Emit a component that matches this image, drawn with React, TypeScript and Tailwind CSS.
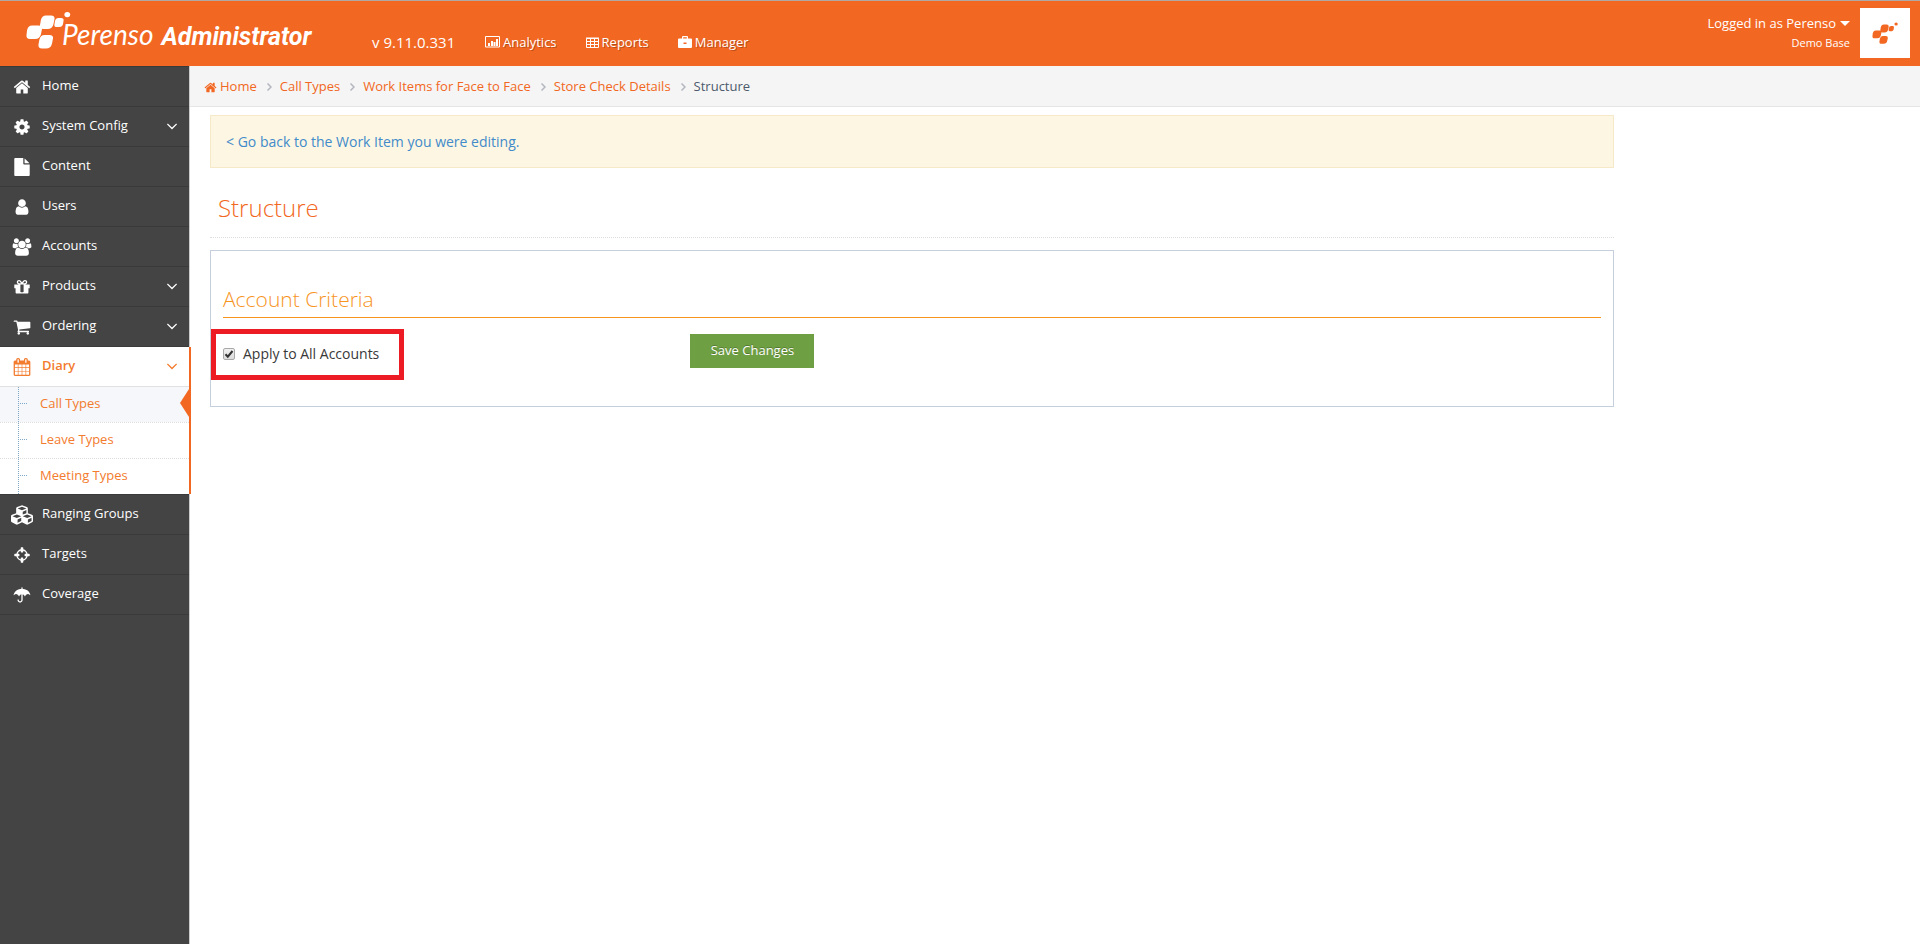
import { FaCubes } from "react-icons/fa";

const icons = {
    home: "M1472 992v480q0 26-19 45t-45 19h-384v-384h-256v384h-384q-26 0-45-19t-19-45v-480q0-1 .5-3t.5-3l575-474 575 474q1 2 1 6zm223-69l-62 74q-8 9-21 11h-3q-13 0-21-7l-692-577-692 577q-12 8-24 7-13-2-21-11l-62-74q-8-10-7-23.5t11-21.5l719-599q32-26 76-26t76 26l244 204v-195q0-14 9-23t23-9h192q14 0 23 9t9 23v408l219 182q10 8 11 21.5t-7 23.5z",
    cog: "M1152 896q0-106-75-181t-181-75-181 75-75 181 75 181 181 75 181-75 75-181zm512-109v222q0 12-8 23t-20 13l-185 28q-19 54-39 91 35 50 107 138 10 12 10 25t-9 23q-27 37-99 108t-94 71q-12 0-26-9l-138-108q-44 23-91 38-16 136-29 186-7 28-36 28h-222q-14 0-24.5-8.5t-11.5-21.5l-28-184q-49-16-90-37l-141 107q-10 9-25 9-14 0-25-11-126-114-165-168-7-10-7-23 0-12 8-23 15-21 51-66.5t54-70.5q-27-50-41-99l-183-27q-13-2-21-12.5t-8-23.5v-222q0-12 8-23t19-13l186-28q14-46 39-92-40-57-107-138-10-12-10-24 0-10 9-23 26-36 98.5-107.5t94.5-71.5q13 0 26 10l138 107q44-23 91-38 16-136 29-186 7-28 36-28h222q14 0 24.5 8.5t11.5 21.5l28 184q49 16 90 37l142-107q9-9 24-9 13 0 25 10 129 119 165 170 7 8 7 22 0 12-8 23-15 21-51 66.5t-54 70.5q26 50 41 98l183 28q13 2 21 12.5t8 23.5z",
    file: "M1152 512v-472q22 14 36 28l408 408q14 14 28 36h-472zm-128 32q0 40 28 68t68 28h544v1056q0 40-28 68t-68 28h-1344q-40 0-68-28t-28-68v-1600q0-40 28-68t68-28h800v544z",
    user: "M1536 1399q0 109-62.5 187t-150.5 78h-854q-88 0-150.5-78t-62.5-187q0-85 8.5-160.5t31.5-152 58.5-131 94-89 134.5-34.5q131 128 313 128t313-128q76 0 134.5 34.5t94 89 58.5 131 31.5 152 8.5 160.5zm-256-887q0 159-112.5 271.5t-271.5 112.5-271.5-112.5-112.5-271.5 112.5-271.5 271.5-112.5 271.5 112.5 112.5 271.5z",
    users: "M657 896q-162 5-265 128h-134q-82 0-138-40.5t-56-118.5q0-353 124-353 6 0 43.5 21t97.5 42.5 119 21.5q67 0 133-23-5 37-5 66 0 159 81 256zm1071 637q0 120-73 189.5t-194 69.5h-874q-121 0-194-69.5t-73-189.5q0-53 3.5-103.5t14-109 26.5-108.5 43-97.5 62-81 85.5-53.5 111.5-20q10 0 43 21.5t73 48 107 48 135 21.5 135-21.5 107-48 73-48 43-21.5q61 0 111.5 20t85.5 53.5 62 81 43 97.5 26.5 108.5 14 109 3.5 103.5zm-1024-1277q0 106-75 181t-181 75-181-75-75-181 75-181 181-75 181 75 75 181zm704 384q0 159-112.5 271.5t-271.5 112.5-271.5-112.5-112.5-271.5 112.5-271.5 271.5-112.5 271.5 112.5 112.5 271.5zm576 225q0 78-56 118.5t-138 40.5h-134q-103-123-265-128 81-97 81-256 0-29-5-66 66 23 133 23 59 0 119-21.5t97.5-42.5 43.5-21q124 0 124 353zm-128-609q0 106-75 181t-181 75-181-75-75-181 75-181 181-75 181 75 75 181z",
    gift: "M1056 1356v-716h-320v716q0 25 18 38.5t46 13.5h192q28 0 46-13.5t18-38.5zm-456-844h195l-126-161q-26-31-69-31-40 0-68 28t-28 68 28 68 68 28zm688-96q0-40-28-68t-68-28q-43 0-69 31l-125 161h194q40 0 68-28t28-68zm376 256v320q0 14-9 23t-23 9h-96v416q0 40-28 68t-68 28h-1088q-40 0-68-28t-28-68v-416h-96q-14 0-23-9t-9-23v-320q0-14 9-23t23-9h440q-93 0-158.5-65.5t-65.5-158.5 65.5-158.5 158.5-65.5q107 0 168 77l128 165 128-165q61-77 168-77 93 0 158.5 65.5t65.5 158.5-65.5 158.5-158.5 65.5h440q14 0 23 9t9 23z",
    cart: "M704 1536q0 52-38 90t-90 38-90-38-38-90 38-90 90-38 90 38 38 90zm896 0q0 52-38 90t-90 38-90-38-38-90 38-90 90-38 90 38 38 90zm128-1088v512q0 24-16.5 42.5t-40.5 21.5l-1044 122q13 60 13 70 0 16-24 64h920q26 0 45 19t19 45-19 45-45 19h-1024q-26 0-45-19t-19-45q0-11 8-31.5t16-36 21.5-40 15.5-29.5l-177-823h-204q-26 0-45-19t-19-45 19-45 45-19h256q16 0 28.5 6.5t19.5 15.5 13 24.5 8 26 5.5 29.5 4.5 26h1201q26 0 45 19t19 45z",
    calendar: "M192 1664h288v-288h-288v288zm352 0h320v-288h-320v288zm-352-352h288v-320h-288v320zm352 0h320v-320h-320v320zm-352-384h288v-288h-288v288zm736 736h320v-288h-320v288zm-384-736h320v-288h-320v288zm768 736h288v-288h-288v288zm-384-352h320v-320h-320v320zm-352-864v-288q0-13-9.5-22.5t-22.5-9.5h-64q-13 0-22.5 9.5t-9.5 22.5v288q0 13 9.5 22.5t22.5 9.5h64q13 0 22.5-9.5t9.5-22.5zm736 864h288v-320h-288v320zm-384-384h320v-288h-320v288zm384 0h288v-288h-288v288zm32-480v-288q0-13-9.5-22.5t-22.5-9.5h-64q-13 0-22.5 9.5t-9.5 22.5v288q0 13 9.5 22.5t22.5 9.5h64q13 0 22.5-9.5t9.5-22.5zm384-64v1280q0 52-38 90t-90 38h-1408q-52 0-90-38t-38-90v-1280q0-52 38-90t90-38h128v-96q0-66 47-113t113-47h64q66 0 113 47t47 113v96h384v-96q0-66 47-113t113-47h64q66 0 113 47t47 113v96h128q52 0 90 38t38 90z",
    crosshairs: "M1325 1024h-109q-26 0-45-19t-19-45v-128q0-26 19-45t45-19h109q-32-108-112.5-188.5t-188.5-112.5v109q0 26-19 45t-45 19h-128q-26 0-45-19t-19-45v-109q-108 32-188.5 112.5t-112.5 188.5h109q26 0 45 19t19 45v128q0 26-19 45t-45 19h-109q32 108 112.5 188.5t188.5 112.5v-109q0-26 19-45t45-19h128q26 0 45 19t19 45v109q108-32 188.5-112.5t112.5-188.5zm339-192v128q0 26-19 45t-45 19h-143q-37 161-154.5 278.5t-278.5 154.5v143q0 26-19 45t-45 19h-128q-26 0-45-19t-19-45v-143q-161-37-278.5-154.5t-154.5-278.5h-143q-26 0-45-19t-19-45v-128q0-26 19-45t45-19h143q37-161 154.5-278.5t278.5-154.5v-143q0-26 19-45t45-19h128q26 0 45 19t19 45v143q161 37 278.5 154.5t154.5 278.5h143q26 0 45 19t19 45z",
    umbrella: "M896 708v692q0 104-76 180t-180 76-180-76-76-180q0-26 19-45t45-19 45 19 19 45q0 50 39 89t89 39 89-39 39-89v-692q33-11 64-11t64 11zm765 169q0 13-9.5 22.5t-22.5 9.5q-11 0-23-10-49-46-93-69t-102-23q-68 0-128 37t-103 97q-7 10-17.5 28t-14.5 24q-11 17-28 17-18 0-29-17-4-6-14.5-24t-17.5-28q-43-60-102.5-97t-127.5-37-127.5 37-102.5 97q-7 10-17.5 28t-14.5 24q-11 17-29 17-17 0-28-17-4-6-14.5-24t-17.5-28q-43-60-103-97t-128-37q-58 0-102 23t-93 69q-12 10-23 10-13 0-22.5-9.5t-9.5-22.5q0-5 1-7 45-183 172.500-319.500t298-204.500 360.500-68q140 0 274.500 40t246.500 113.500 194.500 187 115.500 251.500q1 2 1 7zm-765-677v98q-42-2-64-2t-64 2v-98q0-26 19-45t45-19 45 19 19 45z",
    angleDown: "M1395 736q0 13-10 23l-466 466q-10 10-23 10t-23-10l-466-466q-10-10-10-23t10-23l50-50q10-10 23-10t23 10l393 393 393-393q10-10 23-10t23 10l50 50q10 10 10 23z",
};

const Icon = ({ name, className, viewBox = "0 0 1792 1792" }: any) => (
    <svg viewBox={viewBox} fill="currentColor" className={className} aria-hidden="true">
        <path d={(icons as any)[name]} />
    </svg>
);

const LogoMark = ({ className }: any) => (
    <svg viewBox="0 0 46 38" fill="currentColor" className={className} aria-hidden="true">
        <path d="M20 4.500h5q4 0 3.500 3.500l-1 5q-1 5-6 5h-4q-4 0-3.500-4l.8-4.500q1-5 5.200-5z" />
        <path d="M6 14.500h6.500q4 0 3.500 3.500l-1 5q-1 5-6 5H4q-4 0-3.500-4l.5-4.500q1-5 5-5z" />
        <path d="M18.500 24h5q4 0 3.500 3.500l-1 5q-1 5-6 5h-4q-4 0-3.500-4l.8-4.500q1-5 5.200-5z" />
        <path d="M32.500 7h2.500q3 0 2.600 2.500l-.6 3.500q-.6 3-3.600 3h-2.400q-3 0-2.600-2.600l.6-3.400q.6-3 3.500-3z" />
        <ellipse cx="41.300" cy="3.600" rx="2.900" ry="2.600" />
    </svg>
);

const menu = [
    { label: "Home", icon: <Icon name="home" className="size-[18px]" /> },
    { label: "System Config", icon: <Icon name="cog" className="size-[18px]" />, arrow: true },
    { label: "Content", icon: <Icon name="file" className="size-[18px]" /> },
    { label: "Users", icon: <Icon name="user" className="size-[18px]" /> },
    { label: "Accounts", icon: <Icon name="users" viewBox="0 0 2048 1792" className="h-[18px] w-5" /> },
    { label: "Products", icon: <Icon name="gift" className="size-[18px]" />, arrow: true },
    { label: "Ordering", icon: <Icon name="cart" className="size-[18px]" />, arrow: true },
    {
        label: "Diary",
        icon: <Icon name="calendar" className="size-[18px]" />,
        arrow: true,
        children: ["Call Types", "Leave Types", "Meeting Types"],
    },
    { label: "Ranging Groups", icon: <FaCubes className="size-[22px]" /> },
    { label: "Targets", icon: <Icon name="crosshairs" className="size-[18px]" /> },
    { label: "Coverage", icon: <Icon name="umbrella" viewBox="0 0 1664 1792" className="size-[18px]" /> },
];

const crumbs = ["Home", "Call Types", "Work Items for Face to Face", "Store Check Details"];

const Header = () => (
    <header className="flex h-[66px] items-start border-t border-[#b0a8a4] bg-[#f26722] text-white">
        <a href="#" className="flex w-[316px] shrink-0 pt-2.5 pl-[26px]">
            <LogoMark className="h-[38px] w-[46px] shrink-0" />
            <span className="-ml-2.5 flex items-baseline gap-2 pt-[7px]">
                <span className="font-['Lato',sans-serif] text-[28px] leading-8 font-normal italic">Perenso</span>
                <span className="font-['Roboto',sans-serif] text-[25px] leading-8 font-bold italic">Administrator</span>
            </span>
        </a>
        <nav className="flex items-center pt-[31px] pl-14 text-[13px] leading-5">
            <span className="w-[113px] text-[15px]">v 9.11.0.331</span>
            <a href="#" className="mr-[29px] flex items-center gap-[3px] [text-shadow:1px_1px_0_rgba(0,0,0,0.25)]">
                <svg viewBox="0 0 15 12" className="h-3 w-[15px]" fill="none" stroke="currentColor" aria-hidden="true">
                    <path d="M.5.500h14v10.500H.5z" />
                    <path strokeWidth="2" d="M4 10V7M7 10V5M9.500 10V6M12 10V3" />
                </svg>
                Analytics
            </a>
            <a href="#" className="mr-[29px] flex items-center gap-[3px] [text-shadow:1px_1px_0_rgba(0,0,0,0.25)]">
                <svg viewBox="0 0 13 11" className="h-[11px] w-[13px]" fill="none" stroke="currentColor" aria-hidden="true">
                    <path d="M.5 1.500h12v9H.5zM0 1h13M.5 4.500h12M.5 7.500h12M4.500 1v9M8.500 1v9" />
                </svg>
                Reports
            </a>
            <a href="#" className="flex items-center gap-[3px] [text-shadow:1px_1px_0_rgba(0,0,0,0.25)]">
                <svg viewBox="0 0 14 12" className="h-3 w-3.5" fill="currentColor" aria-hidden="true">
                    <path fillRule="evenodd" d="M4 2.500V1q0-1 1-1h4q1 0 1 1v1.500h3q1 0 1 1V11q0 1-1 1H1q-1 0-1-1V3.500q0-1 1-1zM5.200 1.200v1.300h3.600V1.200zM5.500 6.500v1.500h3V6.500z" />
                </svg>
                Manager
            </a>
        </nav>
        <button type="button" className="mt-[7px] mr-2.5 ml-auto flex items-start gap-2.5">
            <span className="flex flex-col items-end">
                <span className="flex items-center gap-1 pt-[5px] text-[13px] leading-5">
                    Logged in as Perenso
                    <svg viewBox="0 0 10 5" className="h-[5px] w-2.5" fill="currentColor" aria-hidden="true">
                        <path d="M0 0h10L5 5z" />
                    </svg>
                </span>
                <span className="text-[11px] leading-5">Demo Base</span>
            </span>
            <span className="flex size-[50px] items-center justify-center bg-white text-[#f26722]">
                <LogoMark className="h-[22px] w-[27px]" />
            </span>
        </button>
    </header>
);

const Sidebar = () => (
    <aside className="w-[190px] shrink-0 border-r border-[#ccc] bg-[#444] text-[13px] text-white">
        <ul>
            {menu.map((item) => {
                const open = !!item.children;
                return (
                    <li key={item.label} className={open ? "relative border-t border-[#3a3a3a] bg-white text-[#f37b2e]" : "border-t border-[#3a3a3a]"}>
                        <a href="#" className="flex h-[39px] items-center pr-2">
                            <span className="flex w-[42px] justify-center pl-0.5">{item.icon}</span>
                            <span className={open ? "flex-1 pb-0.5 font-semibold" : "flex-1 pb-0.5"}>{item.label}</span>
                            {item.arrow && <Icon name="angleDown" className="mb-0.5 size-[18px]" />}
                        </a>
                        {item.children && (
                            <ul className="relative border-t border-[#e0e0e0]">
                                <li aria-hidden="true" className="absolute inset-y-0 left-[18px] border-l border-dotted border-[#7fa8c8]" />
                                {item.children.map((child, index) => (
                                    <li key={child} className={index === 0 ? "bg-[#f5f7fa]" : "border-t border-dotted border-[#ddd]"}>
                                        <a href="#" className="flex h-[35px] items-center pb-0.5 pl-5">
                                            <span className="mr-[13px] w-[7px] border-t border-dotted border-[#7fa8c8]" />
                                            {child}
                                        </a>
                                    </li>
                                ))}
                            </ul>
                        )}
                        {open && (
                            <>
                                <span className="absolute inset-y-0 -right-0.5 w-0.5 bg-[#f26722]" />
                                <svg viewBox="0 0 9 28" className="absolute top-[42px] right-0 h-7 w-[9px]" fill="#f26722" aria-hidden="true">
                                    <path d="M9 0v28L0 14z" />
                                </svg>
                            </>
                        )}
                    </li>
                );
            })}
            <li className="border-t border-[#3a3a3a]" />
        </ul>
    </aside>
);

const Breadcrumbs = () => (
    <nav aria-label="Breadcrumb" className="flex h-[41px] items-center border-b border-[#e5e5e5] bg-[#f5f5f5] pt-0.5 pl-3.5 text-[13px]">
        {crumbs.map((crumb, index) => (
            <span key={crumb} className="flex items-center text-[#f26722]">
                {index === 0 && <Icon name="home" className="mr-[3px] size-[13px]" />}
                <a href="#">{crumb}</a>
                <svg viewBox="0 0 5 8" className="mr-2 ml-[10px] h-2 w-[5px] text-[#b2b6bf]" fill="none" stroke="currentColor" strokeWidth="1.5" aria-hidden="true">
                    <path d="M.5.500L4 4 .5 7.500" />
                </svg>
            </span>
        ))}
        <span className="text-[#4c5a6b]">Structure</span>
    </nav>
);

const App = () => {
    return (
        <div className="flex min-h-screen flex-col bg-white font-['Open_Sans',sans-serif]">
            <Header />
            <div className="flex flex-1">
                <Sidebar />
                <main className="min-w-0 flex-1">
                    <Breadcrumbs />
                    <div className="px-2 pt-2">
                        <div className="w-10/12 px-3">
                            <div className="border border-[#f5e9c9] bg-[#fdf6e3] px-[15px] py-4 text-sm leading-[19px] text-[#428bca]">
                                <a href="#">&lt; Go back to the Work Item you were editing.</a>
                            </div>
                            <h1 className="border-b border-dotted border-[#ddd] px-2 pt-6 pb-[13px] text-2xl leading-8 font-light text-[#f26722]">Structure</h1>
                            <section className="mt-3 border border-[#c5d0dc] px-3 pt-8 pb-8">
                                <h2 className="border-b border-[#f7941e] pb-0.5 text-[21px] leading-8 font-light text-[#f7941e]">Account Criteria</h2>
                                <div className="grid grid-cols-3 items-start gap-6 pt-4">
                                    <div className="relative flex h-10 items-center">
                                        <label className="flex items-center gap-2 text-sm text-[#393939]">
                                            <span className="relative flex">
                                                <input
                                                    type="checkbox"
                                                    defaultChecked
                                                    className="peer size-3 appearance-none rounded-xs border border-[#a9a9a9] bg-linear-to-b from-[#f0f0f0] to-[#dcdcdc]"
                                                />
                                                <svg viewBox="0 0 12 12" className="pointer-events-none absolute inset-0 hidden size-3 peer-checked:block" fill="none" stroke="#333" strokeWidth="2" aria-hidden="true">
                                                    <path d="M2.500 6.200l2.300 2.500L9.500 3" />
                                                </svg>
                                            </span>
                                            Apply to All Accounts
                                        </label>
                                        <span className="pointer-events-none absolute -top-[5px] -left-3 h-[51px] w-[193px] border-5 border-[#ed1c24]" />
                                    </div>
                                    <button type="button" className="h-[34px] w-[124px] bg-[#6f9f43] text-[13px] text-white [text-shadow:0_-1px_0_rgba(0,0,0,0.25)]">
                                        Save Changes
                                    </button>
                                </div>
                            </section>
                        </div>
                    </div>
                </main>
            </div>
        </div>
    );
};

export default App;
